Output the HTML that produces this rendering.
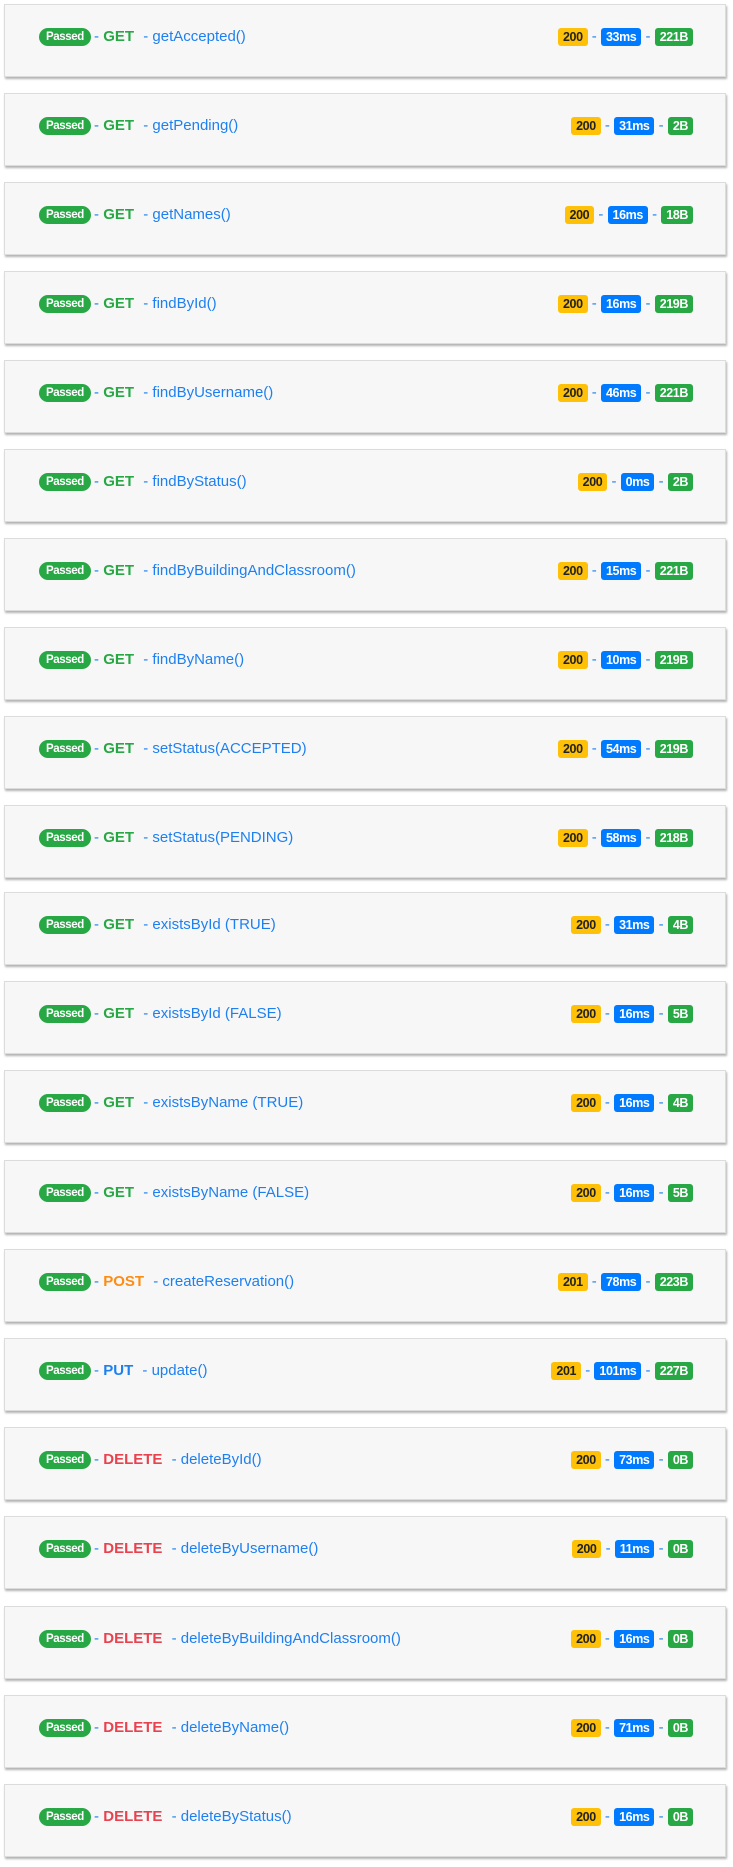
<!DOCTYPE html>
<html><head><meta charset="utf-8"><style>
body{margin:0;background:#fff;width:733px;height:1867px;position:relative;overflow:hidden;font-family:"Segoe UI","Liberation Sans",sans-serif;}
.c{position:absolute;left:4px;width:720px;height:71px;background:#f7f7f7;border:1px solid #dcdcdc;box-shadow:1px 2px 2px rgba(0,0,0,.3);}
.l{position:absolute;left:34px;top:22px;height:20px;line-height:20px;font-size:15px;color:#1e80f0;white-space:nowrap;}
.r{position:absolute;right:32px;top:22px;height:20px;line-height:20px;font-size:15px;color:#1e80f0;white-space:nowrap;}
.p{display:inline-block;background:#28a745;color:#fff;font-weight:bold;font-size:11.5px;line-height:18px;padding:0 7px;border-radius:9px;vertical-align:1px;letter-spacing:-.4px;margin-right:-1px}
.b{display:inline-block;font-weight:bold;font-size:12.5px;line-height:18px;padding:0 5px;border-radius:3px;vertical-align:0;color:#fff;letter-spacing:-.4px}
.y{background:#ffc107;color:#222}.u{background:#007bff}.g{background:#28a745}
.m{font-weight:600;margin:0 5px 0 0}
</style></head><body>
<div id="w"></div>
<script>
var d=[["GET","getAccepted()","200","33ms","221B"],["GET","getPending()","200","31ms","2B"],["GET","getNames()","200","16ms","18B"],["GET","findById()","200","16ms","219B"],["GET","findByUsername()","200","46ms","221B"],["GET","findByStatus()","200","0ms","2B"],["GET","findByBuildingAndClassroom()","200","15ms","221B"],["GET","findByName()","200","10ms","219B"],["GET","setStatus(ACCEPTED)","200","54ms","219B"],["GET","setStatus(PENDING)","200","58ms","218B"],["GET","existsById (TRUE)","200","31ms","4B"],["GET","existsById (FALSE)","200","16ms","5B"],["GET","existsByName (TRUE)","200","16ms","4B"],["GET","existsByName (FALSE)","200","16ms","5B"],["POST","createReservation()","201","78ms","223B"],["PUT","update()","201","101ms","227B"],["DELETE","deleteById()","200","73ms","0B"],["DELETE","deleteByUsername()","200","11ms","0B"],["DELETE","deleteByBuildingAndClassroom()","200","16ms","0B"],["DELETE","deleteByName()","200","71ms","0B"],["DELETE","deleteByStatus()","200","16ms","0B"]];
var col={GET:"#28a745",POST:"#fd8c14",PUT:"#1e80f0",DELETE:"#e8424f"};
var h="";
d.forEach(function(r,i){var t=i<10?4+89*i:892+89.2*(i-10);
h+='<div class="c" style="top:'+t+'px"><div class="l"><span class="p">Passed</span> - <span class="m" style="color:'+col[r[0]]+'">'+r[0]+'</span> - '+r[1]+'</div><div class="r"><span class="b y">'+r[2]+'</span> - <span class="b u">'+r[3]+'</span> - <span class="b g">'+r[4]+'</span></div></div>';});
document.getElementById("w").innerHTML=h;
</script>
</body></html>
